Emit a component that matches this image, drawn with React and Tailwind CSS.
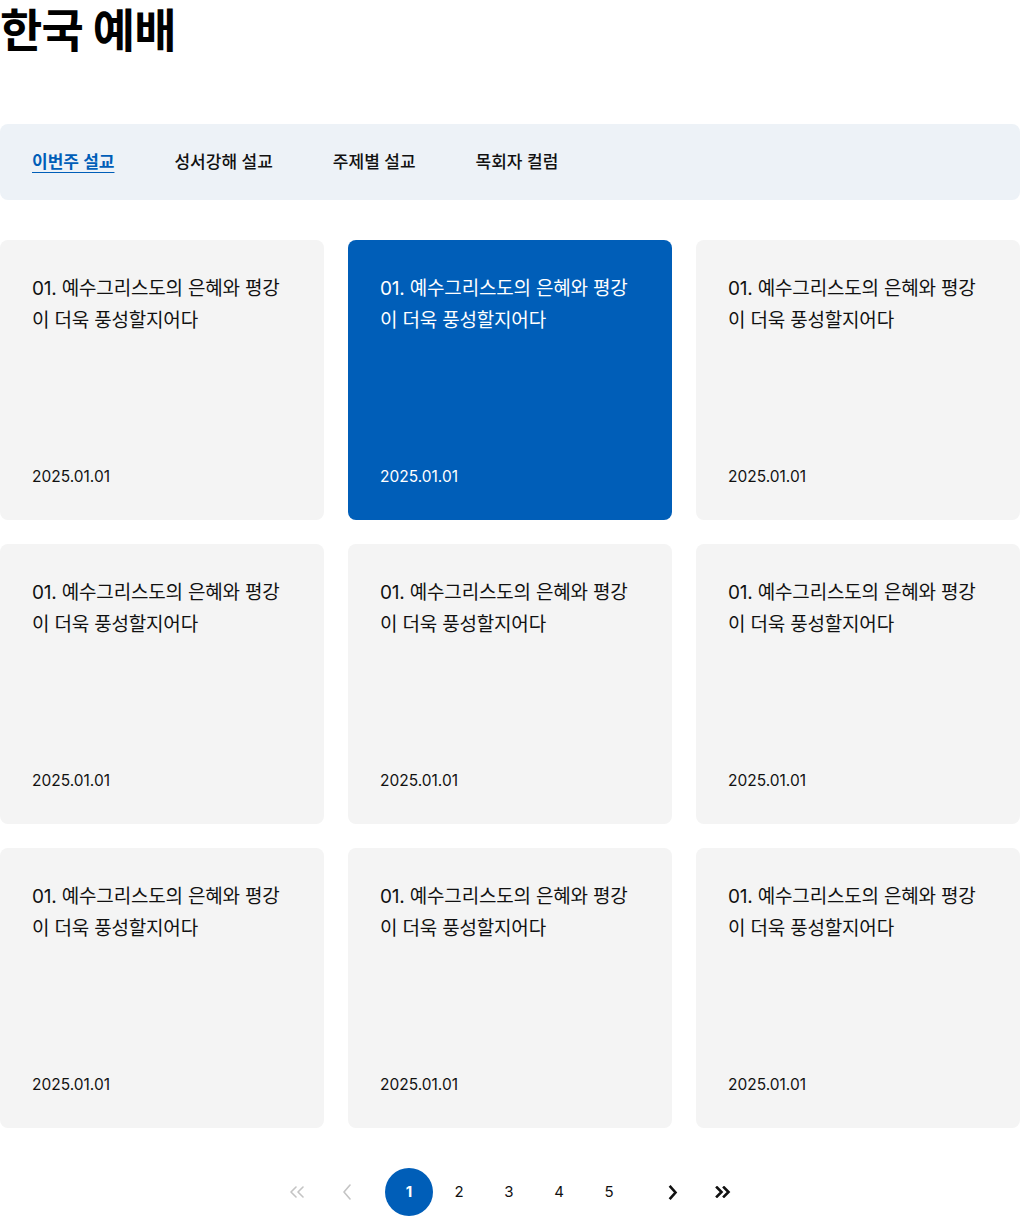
import React, { useState } from 'react';

const TABS = ['이번주 설교', '성서강해 설교', '주제별 설교', '목회자 컬럼'];

const SERMONS = Array.from({ length: 9 }, (_, i) => ({
    id: i,
    title: '01. 예수그리스도의 은혜와 평강이 더욱 풍성할지어다',
    date: '2025.01.01',
}));

function SermonCard({ sermon, active }) {
    return (
        <a
            href="#"
            className={
                'flex h-[280px] flex-col justify-between rounded-lg p-8 ' +
                (active ? 'bg-[#005eb8] text-white' : 'bg-[#f4f4f4] text-[#111]')
            }
        >
            <p className="pt-px text-[19px] leading-[32px] tracking-[-0.01em]">{sermon.title}</p>
            <span className="text-[15.5px] leading-6 translate-y-px">{sermon.date}</span>
        </a>
    );
}

// arrows drawn by hand, the lucide ones are too even for this design
function FirstIcon() {
    return (
        <svg width="16" height="12" viewBox="0 0 16 12" fill="none" stroke="currentColor" strokeWidth="1.6" strokeLinecap="round" strokeLinejoin="round">
            <path d="M7 1 L2 6 L7 11" />
            <path d="M14 1 L9 6 L14 11" />
        </svg>
    );
}

function PrevIcon() {
    return (
        <svg width="10" height="16" viewBox="0 0 10 16" fill="none" stroke="currentColor" strokeWidth="1.6" strokeLinecap="round" strokeLinejoin="round">
            <path d="M8 1 L2 8 L8 15" />
        </svg>
    );
}

function NextIcon() {
    return (
        <svg width="10" height="15" viewBox="0 0 10 15" fill="none" stroke="currentColor" strokeWidth="2.6" strokeLinecap="square" strokeLinejoin="miter">
            <path d="M2.5 1.8 L7.5 7.5 L2.5 13.2" />
        </svg>
    );
}

function LastIcon() {
    return (
        <svg width="16" height="12" viewBox="0 0 16 12" fill="none" stroke="currentColor" strokeWidth="2.6" strokeLinecap="square" strokeLinejoin="miter">
            <path d="M2 1.5 L6.5 6 L2 10.5" />
            <path d="M9 1.5 L13.5 6 L9 10.5" />
        </svg>
    );
}

function Pagination({ page, setPage }) {
    return (
        <nav className="flex items-center justify-center">
            <div className="flex items-center gap-[2px] mr-[14px]">
                <button className="flex h-12 w-12 items-center justify-center text-[#c4c4c4]">
                    <FirstIcon />
                </button>
                <button className="flex h-12 w-12 items-center justify-center text-[#c4c4c4]">
                    <PrevIcon />
                </button>
            </div>
            <div className="flex items-center gap-[2px]">
                {[1, 2, 3, 4, 5].map((n) => (
                    <button
                        key={n}
                        onClick={() => setPage(n)}
                        className={
                            'flex h-12 w-12 items-center justify-center rounded-full text-[15px] ' +
                            (n === page ? 'bg-[#005eb8] font-bold text-white' : 'text-[#111]')
                        }
                    >
                        {n}
                    </button>
                ))}
            </div>
            <div className="flex items-center gap-[2px] ml-4">
                <button className="flex h-12 w-12 items-center justify-center text-[#111]">
                    <NextIcon />
                </button>
                <button className="flex h-12 w-12 items-center justify-center text-[#111]">
                    <LastIcon />
                </button>
            </div>
        </nav>
    );
}

export default function App() {
    const [tab, setTab] = useState(0);
    const [page, setPage] = useState(1);

    return (
        <div
            className="min-h-screen bg-white text-[#111]"
            style={{ fontFamily: 'Inter, "Noto Sans CJK KR", sans-serif' }}
        >
            <h1 className="mb-[64px] text-[46px] font-bold leading-[60px] tracking-[-0.02em] text-black">
                한국 예배
            </h1>

            <div className="flex gap-[60px] rounded-lg bg-[#edf2f7] px-8 py-[26px]">
                {TABS.map((t, i) => (
                    <button
                        key={t}
                        onClick={() => setTab(i)}
                        className={
                            'text-[17px] leading-6 ' +
                            (i === tab
                                ? 'font-semibold text-[#005eb8] underline underline-offset-4'
                                : 'font-medium text-[#111]')
                        }
                    >
                        {t}
                    </button>
                ))}
            </div>

            <div className="mt-10 grid grid-cols-3 gap-6">
                {SERMONS.map((s, i) => (
                    <SermonCard key={s.id} sermon={s} active={i === 1} />
                ))}
            </div>

            <div className="mt-10">
                <Pagination page={page} setPage={setPage} />
            </div>
        </div>
    );
}
